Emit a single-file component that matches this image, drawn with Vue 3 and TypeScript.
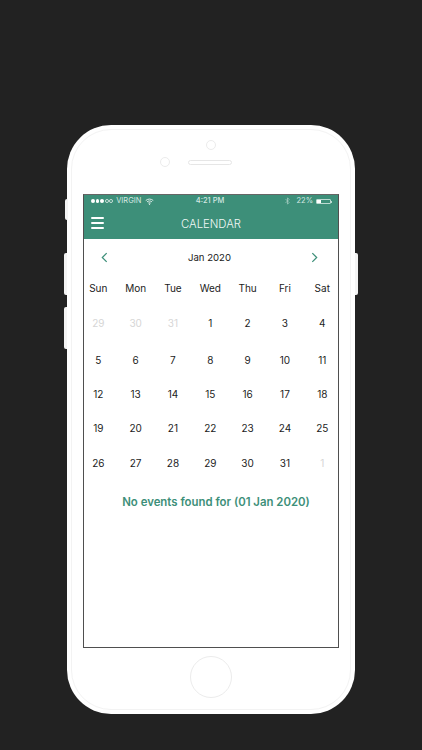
<script setup lang="ts">
interface Cell { n: number; muted?: boolean }
const heads: string[] = ['Sun', 'Mon', 'Tue', 'Wed', 'Thu', 'Fri', 'Sat']
const cells: Cell[] = [
  { n: 29, muted: true }, { n: 30, muted: true }, { n: 31, muted: true },
  ...Array.from({ length: 31 }, (_, i) => ({ n: i + 1 })),
  { n: 1, muted: true },
]
const rows: Cell[][] = []
for (let i = 0; i < cells.length; i += 7) rows.push(cells.slice(i, i + 7))
</script>

<template>
  <div class="page">
    <div class="phone">
      <span class="btn b1"></span>
      <span class="btn b2"></span>
      <span class="btn b3"></span>
      <span class="btn b4"></span>
      <div class="inner-line"></div>

      <div class="top">
        <div class="camera"></div>
        <div class="sensors">
          <span class="sensor"></span>
          <span class="speaker"></span>
        </div>
      </div>

      <div class="screen">
        <div class="status">
          <div class="st-left">
            <span class="dots"><i></i><i></i><i></i><i class="o"></i><i class="o"></i></span>
            <span>VIRGIN</span>
            <svg class="wifi" viewBox="0 0 12 9" width="9" height="7">
              <path d="M1 3.2C4 .6 8 .6 11 3.2M2.7 5C4.7 3.4 7.3 3.4 9.3 5M4.4 6.7C5.4 6 6.6 6 7.6 6.7" fill="none" stroke="#fff" stroke-width="1.1"/>
              <circle cx="6" cy="8" r=".8" fill="#fff"/>
            </svg>
          </div>
          <div class="st-time">4:21 PM</div>
          <div class="st-right">
            <svg class="bt" viewBox="0 0 6 10" width="5" height="8">
              <path d="M.6 2.6 5 7 3 9V1l2 2L.6 7.4" fill="none" stroke="#a9cfc4" stroke-width=".9"/>
            </svg>
            <span>22%</span>
            <span class="battery"><i></i></span>
          </div>
        </div>

        <div class="nav">
          <div class="burger"><i></i><i></i><i></i></div>
          <div class="title">CALENDAR</div>
        </div>

        <div class="month">
          <svg viewBox="0 0 8 12" width="7" height="11"><path d="M6.5 1 1.5 6l5 5" fill="none" stroke="#3d8f79" stroke-width="1.4"/></svg>
          <span>Jan 2020</span>
          <svg viewBox="0 0 8 12" width="7" height="11"><path d="M1.5 1l5 5-5 5" fill="none" stroke="#3d8f79" stroke-width="1.4"/></svg>
        </div>

        <div class="grid heads">
          <span v-for="h in heads" :key="h">{{ h }}</span>
        </div>
        <div v-for="(row, r) in rows" :key="r" class="grid row" :class="'r' + r">
          <span v-for="(c, i) in row" :key="i" :class="{ muted: c.muted }">{{ c.n }}</span>
        </div>

        <div class="empty">No events found for (01 Jan 2020)</div>
      </div>

      <div class="bottom">
        <div class="home"></div>
      </div>
    </div>
  </div>
</template>

<style>
html, body { margin: 0; background: #222222; }
</style>

<style scoped>
.page {
  width: 422px;
  height: 750px;
  background: #222222;
  padding-top: 125px;
  box-sizing: border-box;
  overflow: hidden;
  font-family: Inter, "Liberation Sans", sans-serif;
}
.phone {
  position: relative;
  width: 288px;
  height: 589px;
  margin-left: 67px;
  background: #fff;
  border-radius: 44px;
  display: flex;
  flex-direction: column;
  align-items: center;
}
.inner-line {
  position: absolute;
  inset: 4px;
  border: 1px solid #f3f3f3;
  border-radius: 40px;
  pointer-events: none;
}
.btn { position: absolute; width: 3px; background: #f4f4f4; }
.b1 { left: -2px; top: 74px; height: 21px; border-radius: 2px 0 0 2px; }
.b2 { left: -3px; top: 128px; height: 42px; border-radius: 2px 0 0 2px; }
.b3 { left: -3px; top: 182px; height: 42px; border-radius: 2px 0 0 2px; }
.b4 { right: -3px; top: 128px; height: 42px; border-radius: 0 2px 2px 0; }

.top {
  height: 69px;
  width: 100%;
  display: flex;
  flex-direction: column;
  align-items: center;
  box-sizing: border-box;
  padding-top: 15px;
}
.camera {
  width: 10px;
  height: 10px;
  box-sizing: border-box;
  border: 1px solid #ececec;
  border-radius: 50%;
}
.sensors {
  display: flex;
  align-items: center;
  margin-top: 7px;
  margin-left: -30px;
  gap: 18px;
}
.sensor {
  width: 10px;
  height: 10px;
  box-sizing: border-box;
  border: 1px solid #ececec;
  border-radius: 50%;
}
.speaker {
  width: 44px;
  height: 5px;
  box-sizing: border-box;
  border: 1px solid #e6e6e6;
  border-radius: 3px;
}

.screen {
  width: 256px;
  height: 454px;
  box-sizing: border-box;
  border: 1px solid #4f4f4f;
  border-top-color: #666;
  background: #fff;
  display: flex;
  flex-direction: column;
  overflow: hidden;
}
.status {
  height: 12px;
  background: #3d8f79;
  color: #d5e8e2;
  font-size: 7.5px;
  line-height: 12px;
  display: flex;
  align-items: center;
  justify-content: space-between;
  padding: 0 7px;
  position: relative;
}
.st-left { display: flex; align-items: center; gap: 2px; }
.dots { display: flex; gap: 0.8px; margin-right: 1px; }
.dots i { width: 3.8px; height: 3.8px; border-radius: 50%; background: #fff; box-sizing: border-box; }
.dots i.o { background: transparent; border: 0.5px solid #cfe3dd; }
.wifi { margin-left: 2px; }
.st-time {
  position: absolute;
  left: -2px;
  right: 0;
  text-align: center;
  font-weight: 500;
}
.st-right { display: flex; align-items: center; gap: 3px; }
.bt { margin-right: 3px; }
.battery {
  width: 15px;
  height: 5px;
  border: 0.5px solid #bcdad1;
  box-sizing: border-box;
  border-radius: 1px;
  position: relative;
  display: block;
}
.battery i { display: block; width: 4px; height: 100%; background: #fff; }
.battery::after {
  content: "";
  position: absolute;
  right: -2px;
  top: 1px;
  width: 1px;
  height: 2px;
  background: #bcdad1;
}
.nav {
  height: 32px;
  background: #3d8f79;
  position: relative;
  display: flex;
  align-items: center;
  justify-content: center;
  padding-top: 1px;
  box-sizing: border-box;
}
.burger {
  position: absolute;
  left: 7px;
  top: 10px;
  width: 13px;
  display: flex;
  flex-direction: column;
  gap: 3px;
}
.burger i { display: block; height: 2px; background: #fff; border-radius: 1px; }
.title {
  color: #f2f8f6;
  font-size: 11.3px;
  font-weight: 300;
}
.month {
  height: 36px;
  display: flex;
  align-items: center;
  justify-content: space-between;
  padding: 0 20px 0 17px;
  font-size: 9.6px;
  color: #222;
}
.grid {
  display: grid;
  grid-template-columns: repeat(7, 24px);
  column-gap: 13.33px;
  padding-left: 2.3px;
  text-align: center;
  color: #1c1c1c;
}
.heads {
  height: 26px;
  align-items: center;
  font-size: 10px;
}
.row { height: 34.4px; align-items: center; font-size: 10px; }
.r0 { height: 36px; margin-top: 4px; }
.r1 { margin-top: 1.5px; }
.muted { color: #d6d6d6; }
.empty {
  margin-top: 15px;
  padding-left: 10px;
  text-align: center;
  color: #3d8f79;
  font-size: 11.4px;
  font-weight: 600;
}
.bottom {
  flex: 1;
  display: flex;
  justify-content: center;
  align-items: flex-start;
  padding-top: 8px;
}
.home {
  width: 42px;
  height: 42px;
  box-sizing: border-box;
  border: 1px solid #ececec;
  border-radius: 50%;
}
</style>
